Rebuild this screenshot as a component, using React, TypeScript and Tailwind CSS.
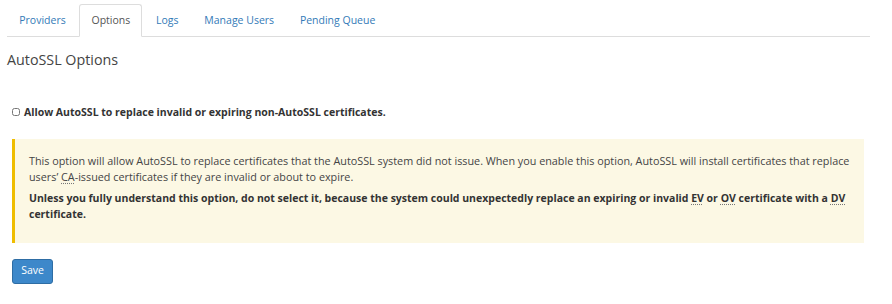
import { useState } from 'react'

const TABS = ['Providers', 'Options', 'Logs', 'Manage Users', 'Pending Queue']

function Abbr({ children }: { children: string }) {
  return <abbr className="underline decoration-dotted decoration-[#777] underline-offset-2">{children}</abbr>
}

export default function App() {
  const [active, setActive] = useState('Options')
  const [allow, setAllow] = useState(false)

  return (
    <div
      className="w-[892px] h-[304px] bg-white text-[#333] overflow-hidden"
      style={{ fontFamily: '"Open Sans", "Liberation Sans", sans-serif' }}
    >
      <div className="pl-[7px] pr-[22px] pt-[4px]">
        {/* Tabs */}
        <ul className="flex border-b border-[#ddd] text-[10.5px] leading-[15px]">
          {TABS.map(tab => {
            const isActive = tab === active
            return (
              <li key={tab} className="mr-[1.3px] -mb-px">
                <button
                  onClick={() => setActive(tab)}
                  className={
                    isActive
                      ? 'block px-[11.25px] pt-[8px] pb-[7.5px] rounded-t-[3px] border border-[#ddd] border-b-white bg-white text-[#555]'
                      : 'block px-[11.25px] pt-[8px] pb-[7.5px] rounded-t-[3px] border border-transparent text-[#337ab7]'
                  }
                >
                  {tab}
                </button>
              </li>
            )
          })}
        </ul>

        {/* Heading */}
        <h3 className="mt-[14px] text-[14.3px] leading-[17px] font-normal text-[#444]">AutoSSL Options</h3>

        {/* Checkbox */}
        <label className="mt-[37px] ml-[5px] flex items-center gap-[4px] text-[10.5px] leading-[14px] font-bold text-[#333]">
          <input
            type="checkbox"
            checked={allow}
            onChange={e => setAllow(e.target.checked)}
            className="w-[8px] h-[8px] m-0"
          />
          <span>Allow AutoSSL to replace invalid or expiring non-AutoSSL certificates.</span>
        </label>

        {/* Warning */}
        <div className="mt-[20px] ml-[5px] mr-[6px] h-[104px] bg-[#fcf8e4] border-l-[3px] border-[#efbd00] pl-[14px] pr-[12px] pt-[14px] text-[10.8px] leading-[16.5px] text-[#444]">
          <p>
            This option will allow AutoSSL to replace certificates that the AutoSSL system did not issue. When you enable this option, AutoSSL will install certificates that replace users’ <Abbr>CA</Abbr>-issued certificates if they are invalid or about to expire.
          </p>
          <p className="mt-[4px] text-[10.5px] font-bold text-[#333]">
            Unless you fully understand this option, do not select it, because the system could unexpectedly replace an expiring or invalid <Abbr>EV</Abbr> or <Abbr>OV</Abbr> certificate with a <Abbr>DV</Abbr> certificate.
          </p>
        </div>

        {/* Save */}
        <button className="mt-[16px] ml-[5px] w-[41px] h-[25px] rounded-[3px] bg-[#3d88ca] border border-[#2e6da4] text-white text-[10.5px]">
          Save
        </button>
      </div>
    </div>
  )
}
